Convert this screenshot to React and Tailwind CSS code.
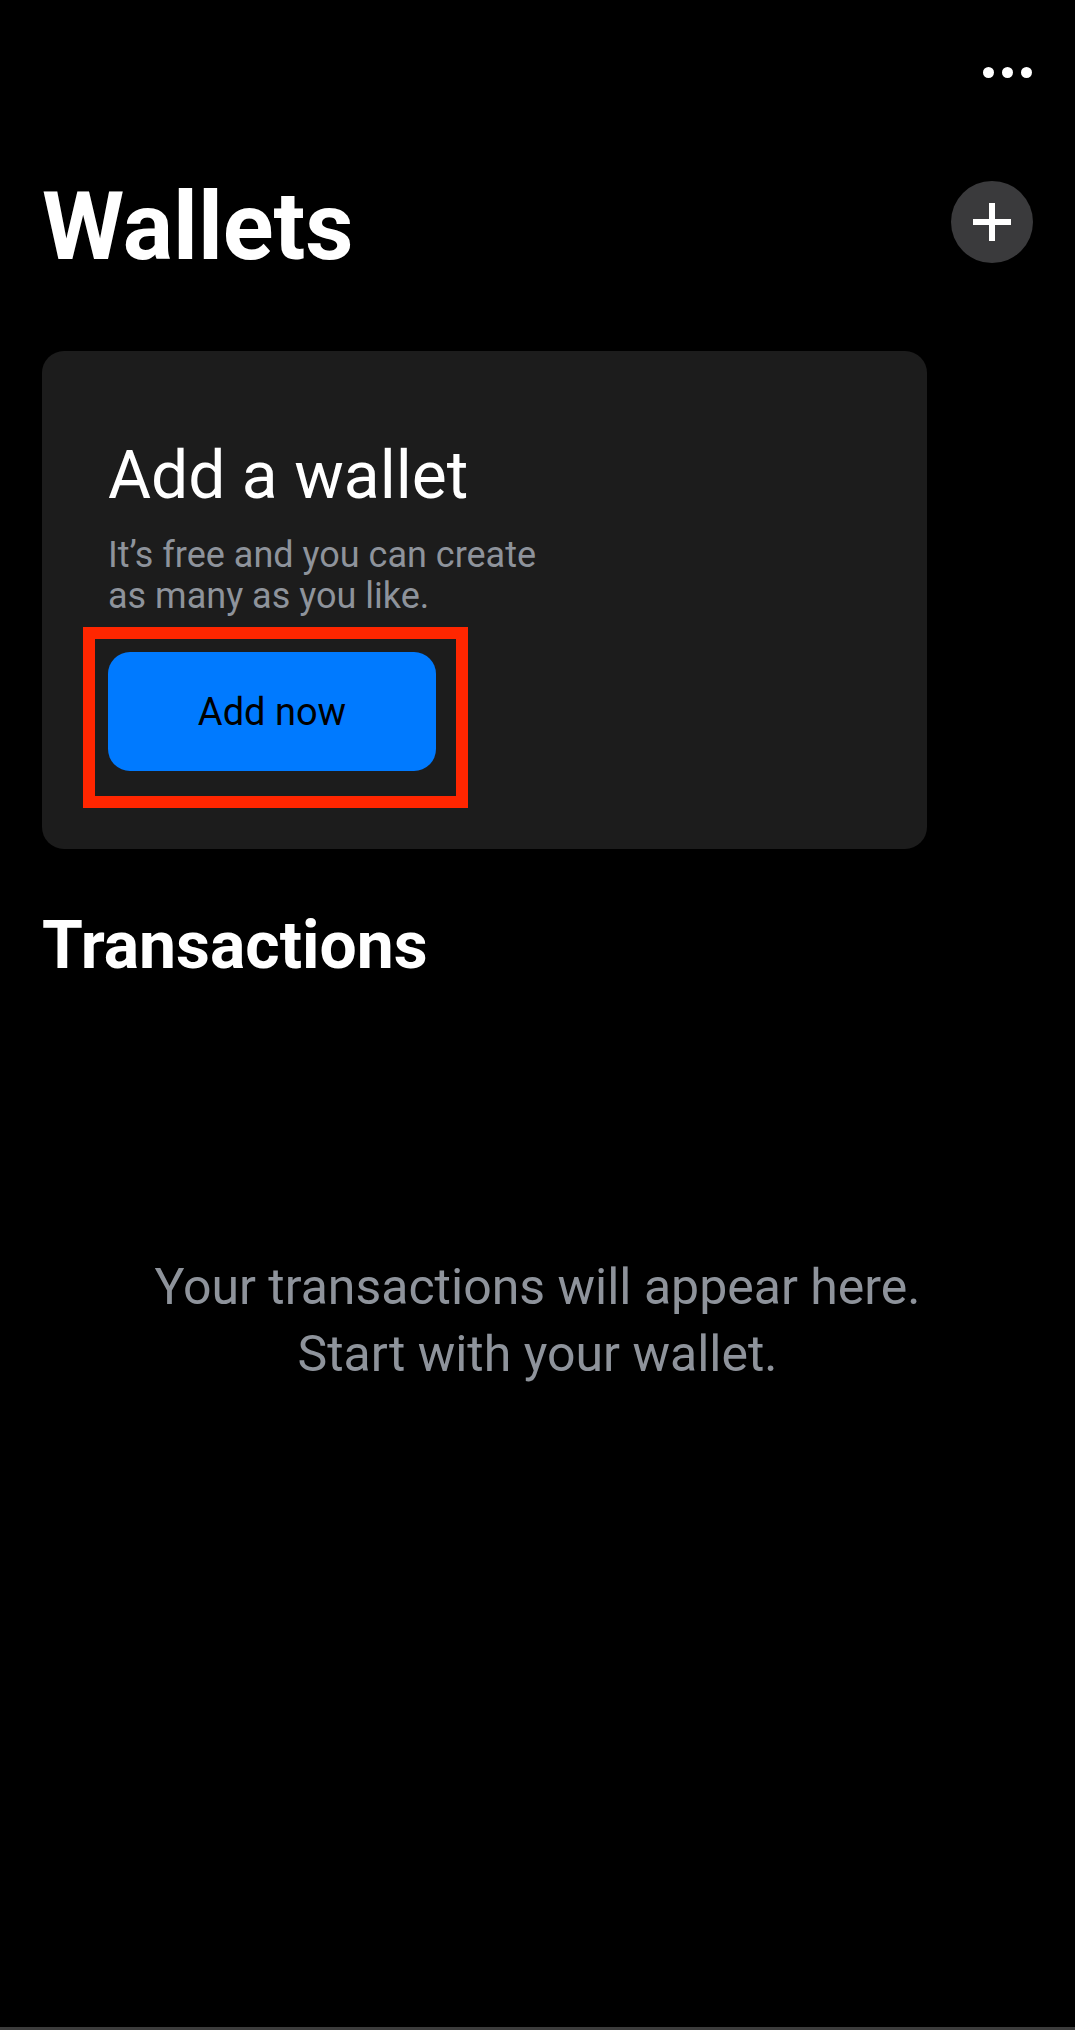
export default function App() {
  return (
    <div
      className="relative flex h-[2030px] w-[1075px] flex-col bg-black px-[42px]"
      style={{ fontFamily: "Roboto, 'Noto Sans', sans-serif" }}
    >
      {/* top overflow menu */}
      <div className="flex justify-end pt-[67px]">
        <div className="flex items-center gap-[8px] pr-[1px]">
          <span className="block h-[11px] w-[11px] rounded-full bg-white" />
          <span className="block h-[11px] w-[11px] rounded-full bg-white" />
          <span className="block h-[11px] w-[11px] rounded-full bg-white" />
        </div>
      </div>

      {/* header */}
      <div className="mt-[102px] flex items-start justify-between">
        <h1 className="text-[94px] font-bold leading-[94px] text-white">Wallets</h1>
        <button className="mt-[1px] flex h-[82px] w-[82px] items-center justify-center rounded-full bg-[#3a3a3c]">
          <svg width="38" height="38" viewBox="0 0 38 38">
            <rect x="0" y="16" width="38" height="6" fill="white" />
            <rect x="16" y="0" width="6" height="38" fill="white" />
          </svg>
        </button>
      </div>

      {/* add wallet card */}
      <div className="mt-[77px] flex h-[498px] w-[885px] flex-col rounded-[22px] bg-[#1c1c1c] pl-[66px] pt-[92px]">
        <h2 className="text-[66px] font-normal leading-[66px] text-white">Add a wallet</h2>
        <p className="mt-[26px] text-[36px] leading-[41px] text-[#8e939b]">
          It’s free and you can create
          <br />
          as many as you like.
        </p>
        <div className="relative mt-[35px] w-[328px]">
          <button className="flex h-[119px] w-[328px] items-center justify-center rounded-[22px] bg-[#007aff] text-[38px] leading-none text-black">
            Add now
          </button>
          <div className="pointer-events-none absolute left-[-25px] top-[-25px] h-[181px] w-[385px] border-[12px] border-[#ff2600]" />
        </div>
      </div>

      {/* transactions */}
      <h2 className="mt-[64px] text-[66px] font-bold leading-[66px] text-white">Transactions</h2>

      <p className="mt-[275px] text-center text-[50px] leading-[67px] text-[#8e939b]">
        Your transactions will appear here.
        <br />
        Start with your wallet.
      </p>

      <div className="flex-1" />
      <div className="-mx-[42px] h-[3px] bg-[#3c3c3c]" />
    </div>
  );
}
